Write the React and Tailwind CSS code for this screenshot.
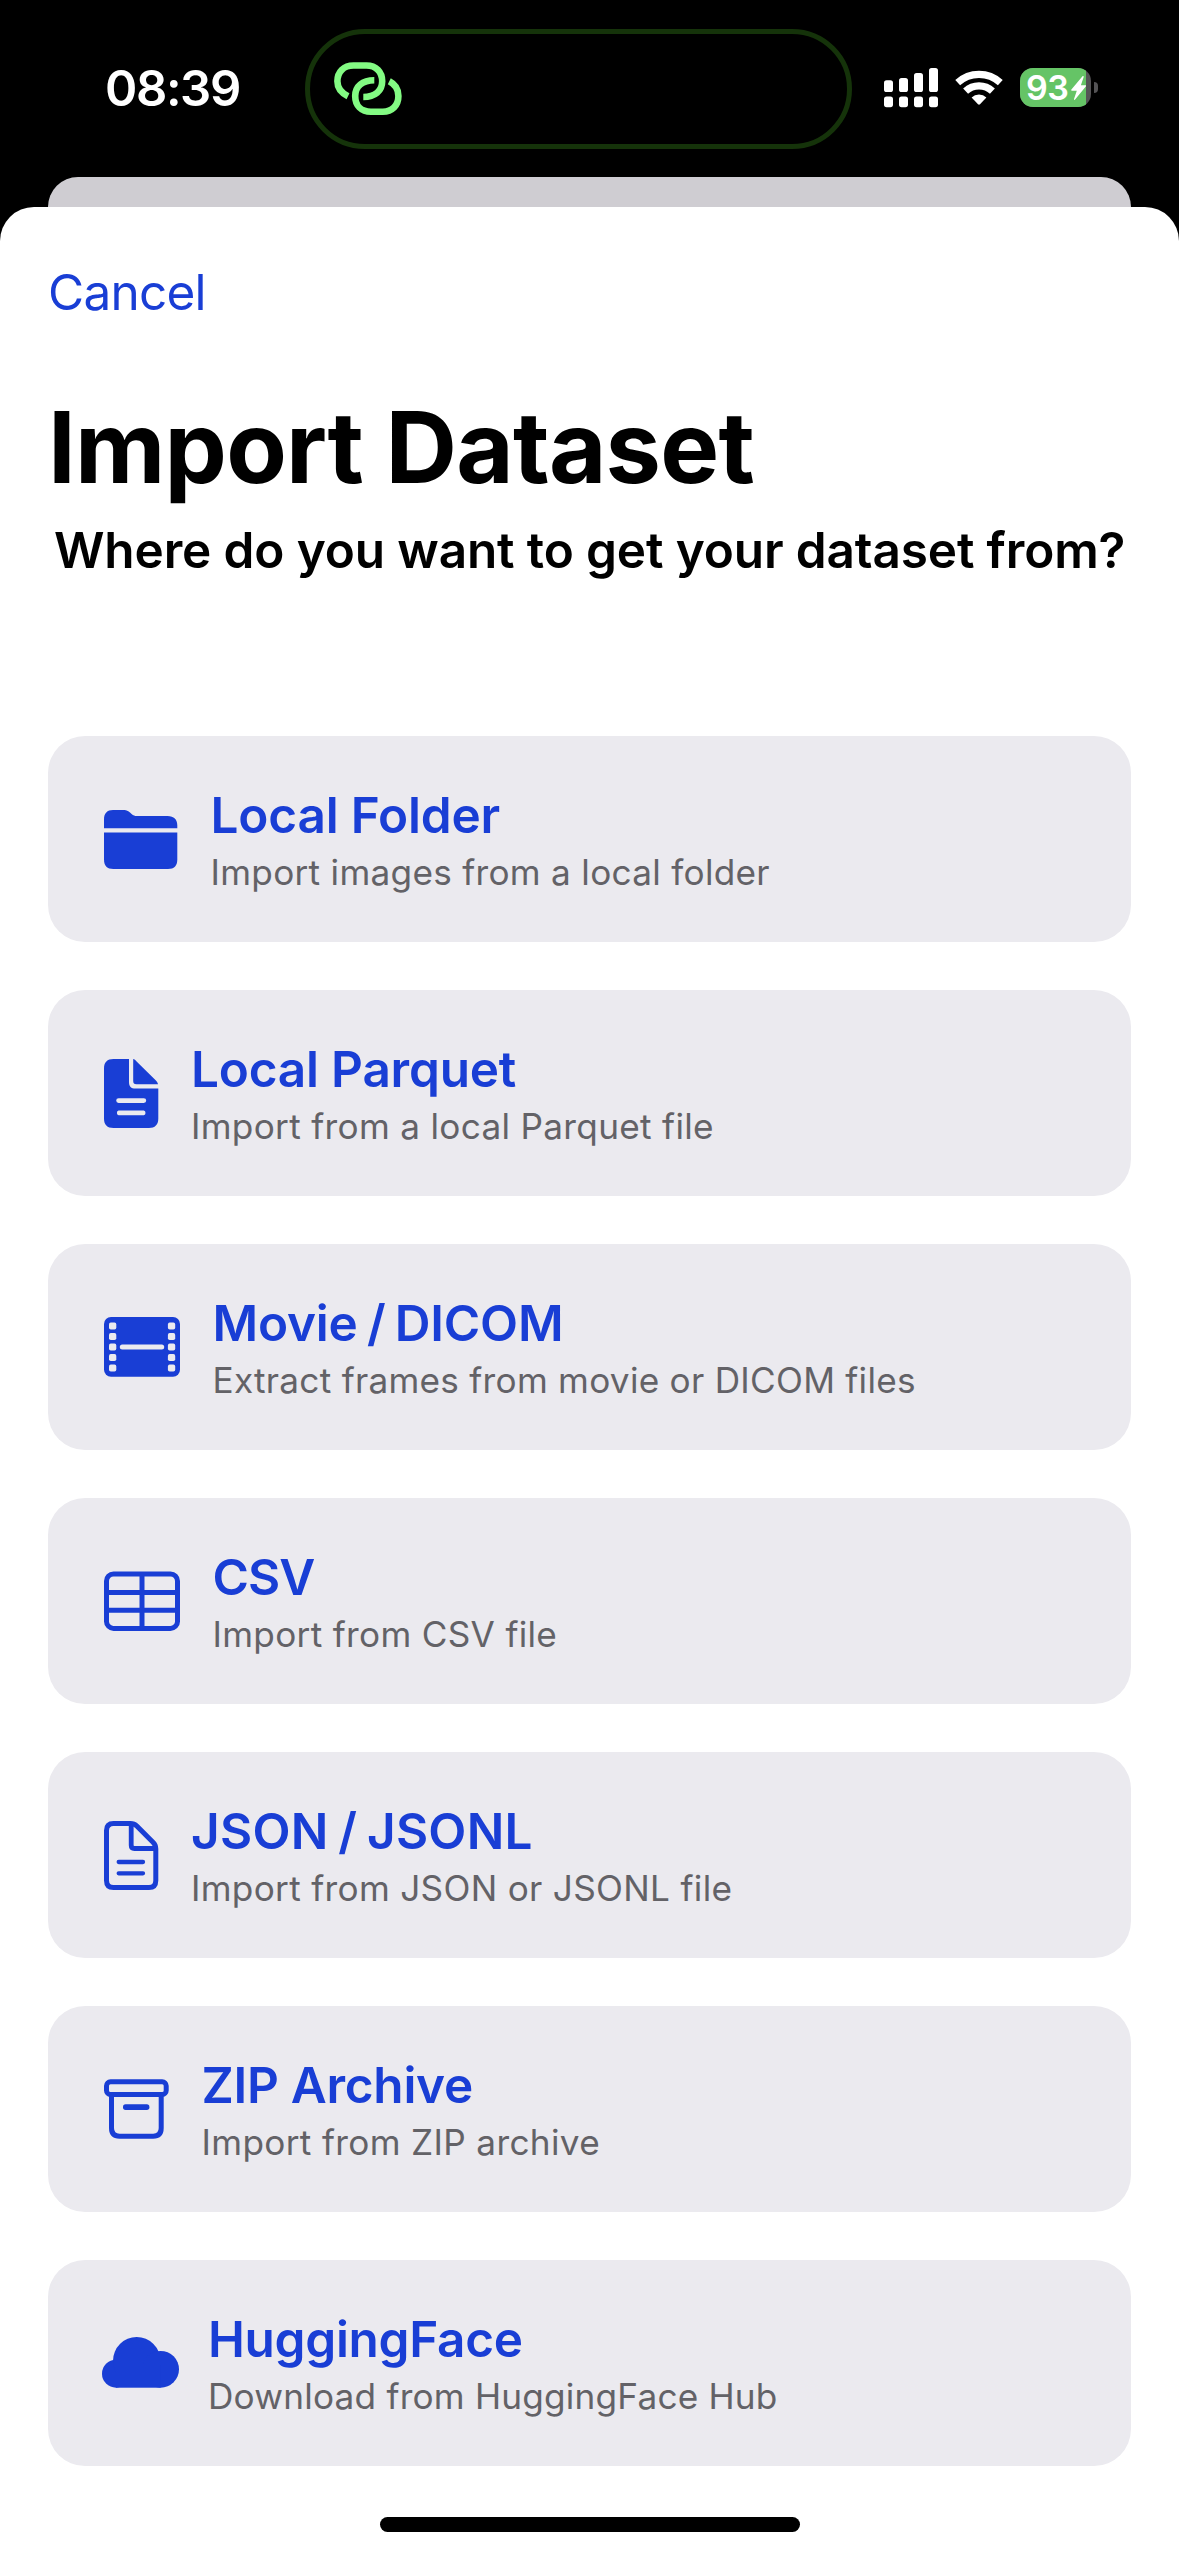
import React from "react";

function FolderIcon() {
  return (
    <svg width="74" height="61" viewBox="0 -1 74 61" fill="currentColor" className="shrink-0">
      <path d="M0 18.2V9.5C0 3.2 3.2 0 9 0H18.5C22 0 23.6.6 26 2.6L27.6 4C29.4 5.6 30.6 6 33 6H63.5C70 6 73.3 9.4 73.3 15.5V18.2Z" />
      <path d="M0 22.4H73.3V49.5C73.3 56 70 59 64 59H9.3C3.2 59 0 56 0 49.5Z" />
    </svg>
  );
}

function DocFilledIcon() {
  return (
    <svg width="54.5" height="69" viewBox="0 0 54.5 69" fill="currentColor" className="shrink-0">
      <path
        fillRule="evenodd"
        d="M9.5 0H25V23C25 27.4 27 29.6 31.5 29.6H54.3V59.5C54.3 65.8 51 69 45 69H9.5C3.2 69 0 65.8 0 59.5V9.5C0 3.2 3.2 0 9.5 0ZM14.6 39.2A2.4 2.4 0 0 0 14.6 44H39.8A2.4 2.4 0 0 0 39.8 39.2ZM14.6 51.6A2.4 2.4 0 0 0 14.6 56.2H39.8A2.4 2.4 0 0 0 39.8 51.6Z"
      />
      <path d="M29.2 0C30.4.3 31.4 1.2 32.6 2.4L51.4 21C52.8 22.4 53.6 23.6 54 25.2H32.4C30.2 25.2 29.2 24.2 29.2 22Z" />
    </svg>
  );
}

const holes = [5.6, 16.1, 26.6, 37.1, 47.6];

function FilmIcon() {
  return (
    <svg width="76" height="60" viewBox="0 0 76 60" className="shrink-0">
      <rect width="76" height="59.7" rx="7" fill="currentColor" />
      {holes.map((y) => (
        <g key={y} fill="#ebeaef">
          <rect x="5" y={y} width="7.3" height="7" rx="1.8" />
          <rect x="63.9" y={y} width="7.3" height="7" rx="1.8" />
        </g>
      ))}
      <rect x="15.8" y="27.5" width="44.4" height="5" rx="2.5" fill="#ebeaef" />
    </svg>
  );
}

function TableIcon() {
  return (
    <svg width="76" height="60" viewBox="0 0 76 60" fill="none" stroke="currentColor" strokeWidth="5" className="shrink-0">
      <rect x="2.5" y="2.9" width="71" height="54.5" rx="7" />
      <path d="M2.5 21.4H73.5M2.5 39.3H73.5M38 2.9V57.4" />
    </svg>
  );
}

function DocIcon() {
  return (
    <svg width="54.5" height="69" viewBox="0 0 54.5 69" fill="none" stroke="currentColor" strokeWidth="5" className="shrink-0">
      <path d="M9.5 2.5H26.5C29.3 2.5 30.9 3.2 32.8 5.1L49 21.3C51.1 23.4 51.8 25 51.8 27.8V59.5C51.8 64.2 49.6 66.5 45 66.5H9.5C4.8 66.5 2.5 64.2 2.5 59.5V9.5C2.5 4.8 4.8 2.5 9.5 2.5Z" />
      <path d="M27.2 3V24.3C27.2 26.4 28.2 27.5 30.4 27.5H51.5" strokeWidth="4.8" />
      <path d="M14.7 41H39M14.7 52.3H39" strokeWidth="4.3" strokeLinecap="round" />
    </svg>
  );
}

function ArchiveIcon() {
  return (
    <svg width="65" height="60" viewBox="0 0 65 60" fill="none" stroke="currentColor" strokeWidth="5" className="shrink-0">
      <rect x="2.5" y="2.8" width="59.7" height="12.7" rx="4" />
      <path d="M7.5 15.5V49C7.5 54.5 10 57.2 15.5 57.2H49.2C54.7 57.2 57.2 54.5 57.2 49V15.5" />
      <rect x="19" y="25.3" width="26.4" height="5.6" rx="2.6" fill="currentColor" stroke="none" />
    </svg>
  );
}

function CloudIcon() {
  return (
    <svg width="77" height="52" viewBox="0 0 77 52" fill="currentColor" className="-ml-0.5 -mr-[3.5px] shrink-0">
      <circle cx="14" cy="36.7" r="14" />
      <circle cx="34.7" cy="23.7" r="23.7" />
      <circle cx="58.6" cy="32.3" r="18.4" />
      <rect x="14" y="28" width="44.6" height="22.7" />
    </svg>
  );
}

const sources = [
  { Icon: FolderIcon, title: "Local Folder", text: "Import images from a local folder", titleClass: "tracking-[-0.18px]", textClass: "tracking-[0.28px]" },
  { Icon: DocFilledIcon, title: "Local Parquet", text: "Import from a local Parquet file", titleClass: "tracking-[-0.2px]", textClass: "tracking-[0.3px]" },
  { Icon: FilmIcon, title: "Movie / DICOM", text: "Extract frames from movie or DICOM files", titleClass: "tracking-[-0.2px] [word-spacing:-3px]", textClass: "tracking-[0.26px]" },
  { Icon: TableIcon, title: "CSV", text: "Import from CSV file", titleClass: "tracking-[-0.9px]", textClass: "tracking-[0.3px]" },
  { Icon: DocIcon, title: "JSON / JSONL", text: "Import from JSON or JSONL file", titleClass: "tracking-[0.25px] [word-spacing:-3px]", textClass: "tracking-[0.3px]" },
  { Icon: ArchiveIcon, title: "ZIP Archive", text: "Import from ZIP archive", titleClass: "tracking-[-0.28px]", textClass: "tracking-[0.33px]" },
  { Icon: CloudIcon, title: "HuggingFace", text: "Download from HuggingFace Hub", titleClass: "tracking-[-0.3px]", textClass: "tracking-[0.2px]" },
];

function SourceCard({ Icon, title, text, titleClass, textClass }) {
  return (
    <button type="button" className="flex h-[206px] w-full items-center gap-[32.5px] rounded-[37px] bg-[#ebeaef] pl-14 text-left text-[#193ed5]">
      <Icon />
      <span className="flex flex-col gap-[3px] pt-[3px] whitespace-nowrap">
        <span className={"text-[49.5px] leading-[60px] font-semibold " + titleClass}>{title}</span>
        <span className={"text-[35.2px] leading-[49px] text-[#636267] " + textClass}>{text}</span>
      </span>
    </button>
  );
}

function Signal() {
  return (
    <svg width="54" height="40" viewBox="0 0 54 40" fill="#fff">
      <rect x="0" y="12.3" width="9" height="11.7" rx="2.6" />
      <rect x="15" y="10" width="9" height="14" rx="2.6" />
      <rect x="30" y="5" width="9" height="19" rx="2.6" />
      <rect x="45" y="0" width="9" height="24" rx="2.6" />
      <rect x="0" y="28.5" width="9" height="10.7" rx="2.6" />
      <rect x="15" y="28.5" width="9" height="10.7" rx="2.6" />
      <rect x="30" y="28.5" width="9" height="10.7" rx="2.6" />
      <rect x="45" y="28.5" width="9" height="10.7" rx="2.6" />
    </svg>
  );
}

function Wifi() {
  return (
    <svg width="48" height="36" viewBox="0 0 48 36" fill="none" stroke="#fff" strokeWidth="7.2">
      <path d="M2.7 12.6A31.6 31.6 0 0 1 45.3 12.6" />
      <path d="M10.6 21.2A19.6 19.6 0 0 1 37.4 21.2" />
      <path d="M16.6 27.4A11 11 0 0 1 31.4 27.4L25 34.3Q24 35.2 23 34.3Z" fill="#fff" stroke="none" />
    </svg>
  );
}

function Battery() {
  return (
    <div className="flex items-center gap-[3px]">
      <div className="flex h-[39px] w-[71px] overflow-hidden rounded-[13px] bg-[#545355]">
        <div className="flex w-[66px] items-center bg-[#65c466] pl-1.5">
          <span className="text-[34px] leading-[39px] font-semibold tracking-[-0.6px] text-white">93</span>
          <svg width="15" height="24" viewBox="0 0 15 24" fill="#fff" className="ml-[2.5px] shrink-0">
            <path d="M11.5.3C12.2-.2 12.9.2 12.7 1L9.9 9.2H14.4C15.1 9.2 15.3 9.8 14.8 10.4L4.1 23.6C3.4 24.2 2.7 23.8 3 23L5.8 14.7H.9C.2 14.7-.1 14.1.4 13.5Z" />
          </svg>
        </div>
      </div>
      <div className="h-[11px] w-1 rounded-r-full bg-[#545355]" />
    </div>
  );
}

export default function App() {
  return (
    <div className="flex h-[2556px] w-[1179px] flex-col overflow-hidden bg-black font-['Inter',sans-serif]">
      <header className="flex h-[177px] shrink-0 items-start pl-[105px]">
        <div className="mt-[59px] w-[200px] text-[49px] leading-[60px] font-semibold tracking-[-1.4px] text-white">08:39</div>
        <div className="mt-[29px] h-[120px] w-[547px] rounded-full border-5 border-[#15330a] pt-[26px] pl-[22px]">
          <svg width="72" height="57" viewBox="332 60 72 57" fill="none" stroke="#83fb83" strokeWidth="6.6">
            <path d="M348 96.2C341 92.8 337.4 88 337.4 81.3C337.4 71.6 343.8 65.5 353.5 65.5H366.5C376 65.5 382.2 71.8 382.2 81.3C382.2 91 375 97 363.3 97" />
            <path d="M374.3 80.2C362.4 80.2 355.2 86.4 355.2 96C355.2 105.6 361.2 111.7 371 111.7H382.7C392.2 111.7 398.4 105.4 398.4 96C398.4 89.4 395.4 84.4 389.3 81.3" />
          </svg>
        </div>
        <div className="mt-[68px] ml-8 flex items-start">
          <Signal />
          <div className="mt-[2px] ml-[16.5px]">
            <Wifi />
          </div>
          <div className="ml-[17.5px]">
            <Battery />
          </div>
        </div>
      </header>
      <div className="mx-12 h-[30px] shrink-0 rounded-t-[30px] bg-[#cfcdd2]" />
      <main className="flex flex-1 flex-col rounded-t-[34px] bg-white px-12 pt-[55px]">
        <button type="button" className="self-start text-[49.5px] leading-[60px] tracking-[-0.75px] text-[#193ed5]">Cancel</button>
        <h1 className="mt-[65px] text-[99px] leading-[120px] font-bold tracking-[-0.8px] whitespace-nowrap text-black">Import Dataset</h1>
        <p className="mt-[13px] pl-1.5 text-[49.5px] leading-[60px] font-semibold tracking-[-0.13px] whitespace-nowrap text-black">Where do you want to get your dataset from?</p>
        <div className="mt-[156px] flex flex-col gap-12">
          {sources.map((s) => (
            <SourceCard key={s.title} {...s} />
          ))}
        </div>
        <div className="mt-[51px] h-[15px] w-[420px] self-center rounded-full bg-black" />
      </main>
    </div>
  );
}
